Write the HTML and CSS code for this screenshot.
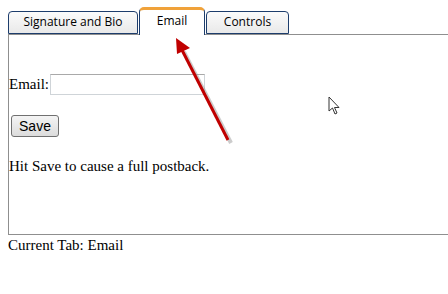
FILE: index.html
```html
<!DOCTYPE html>
<html lang="en">
<head>
  <meta charset="UTF-8" />
  <title>Tabs</title>
  <link rel="stylesheet" href="styles.css">
</head>
<body>

<div class="tabs">
  <div class="tab tab-sig">Signature and Bio</div>
  <div class="tab tab-email active">Email</div>
  <div class="tab tab-controls">Controls</div>
</div>

<div class="panel">
  <div class="row">
    <label for="email">Email:</label>
    <input type="text" id="email" class="email-input" />
  </div>
  <button class="save">Save</button>
  <p class="hint">Hit Save to cause a full postback.</p>
</div>

<div class="current">Current Tab: Email</div>

<!-- annotation arrow -->
<svg class="arrow" width="448" height="294" viewBox="0 0 448 294">
  <line x1="231" y1="143" x2="184" y2="52" stroke="#9a9a9a" stroke-width="4" opacity="0.5" />
  <line x1="228" y1="140" x2="182" y2="50" stroke="#c00000" stroke-width="3" />
  <polygon points="176,38 177,54 190,48" fill="#c00000" />
</svg>

<!-- mouse pointer -->
<svg class="cursor" width="14" height="20" viewBox="0 0 14 20">
  <path d="M1 1 L1 15 L4.5 12 L7 18 L9 17 L6.5 11.5 L11 11.5 Z" fill="#fff" stroke="#333" stroke-width="1" stroke-linejoin="round" />
</svg>

</body>
</html>
```

FILE: styles.css
```css
body {
  margin: 7px 0 0 8px;
  font-family: "Liberation Serif", serif;
  font-size: 15px;
  color: #000;
  background: #fff;
  position: relative;
}

.tabs {
  display: flex;
  align-items: flex-end;
  height: 27px;
  gap: 1px;
}
.tab {
  box-sizing: border-box;
  height: 23px;
  border: 1px solid #1d3d6c;
  border-radius: 4px 4px 0 0;
  background: linear-gradient(#fbfbfb, #e9e9e9);
  font-family: "Open Sans", "DejaVu Sans", sans-serif;
  font-size: 12px;
  color: #000;
  text-align: center;
  line-height: 19px;
}
.tab-sig { width: 130px; }
.tab-email { width: 66px; }
.tab-controls { width: 83px; }
.tab.active {
  height: 28px;
  margin-bottom: -1px;
  border-top: 3px solid #f0a23a;
  border-bottom: none;
  border-radius: 5px 5px 0 0;
  background: #fff;
  line-height: 21px;
  position: relative;
  z-index: 1;
}

.panel {
  box-sizing: border-box;
  height: 201px;
  border: 1px solid #8f8f8f;
  border-right: none;
  padding-top: 38px;
}
.row {
  display: flex;
  align-items: center;
  gap: 1px;
  height: 22px;
}
.email-input {
  box-sizing: border-box;
  width: 155px;
  height: 21px;
  border: 1px solid #cfd4d8;
  border-top-color: #a9a9a9;
  margin: 0;
}
.save {
  box-sizing: border-box;
  display: block;
  margin: 20px 0 0 2px;
  width: 48px;
  height: 22px;
  border: 1px solid #707070;
  border-radius: 3px;
  background: linear-gradient(#f4f4f4, #dcdcdc);
  font-family: "Liberation Sans", Arial, sans-serif;
  font-size: 14px;
  padding: 0;
}
.hint {
  margin: 21px 0 0;
}

.current {
  line-height: 18px;
  padding-top: 1px;
}

.arrow {
  position: absolute;
  left: -8px;
  top: -7px;
  pointer-events: none;
}
.cursor {
  position: absolute;
  left: 320px;
  top: 89px;
}
```
